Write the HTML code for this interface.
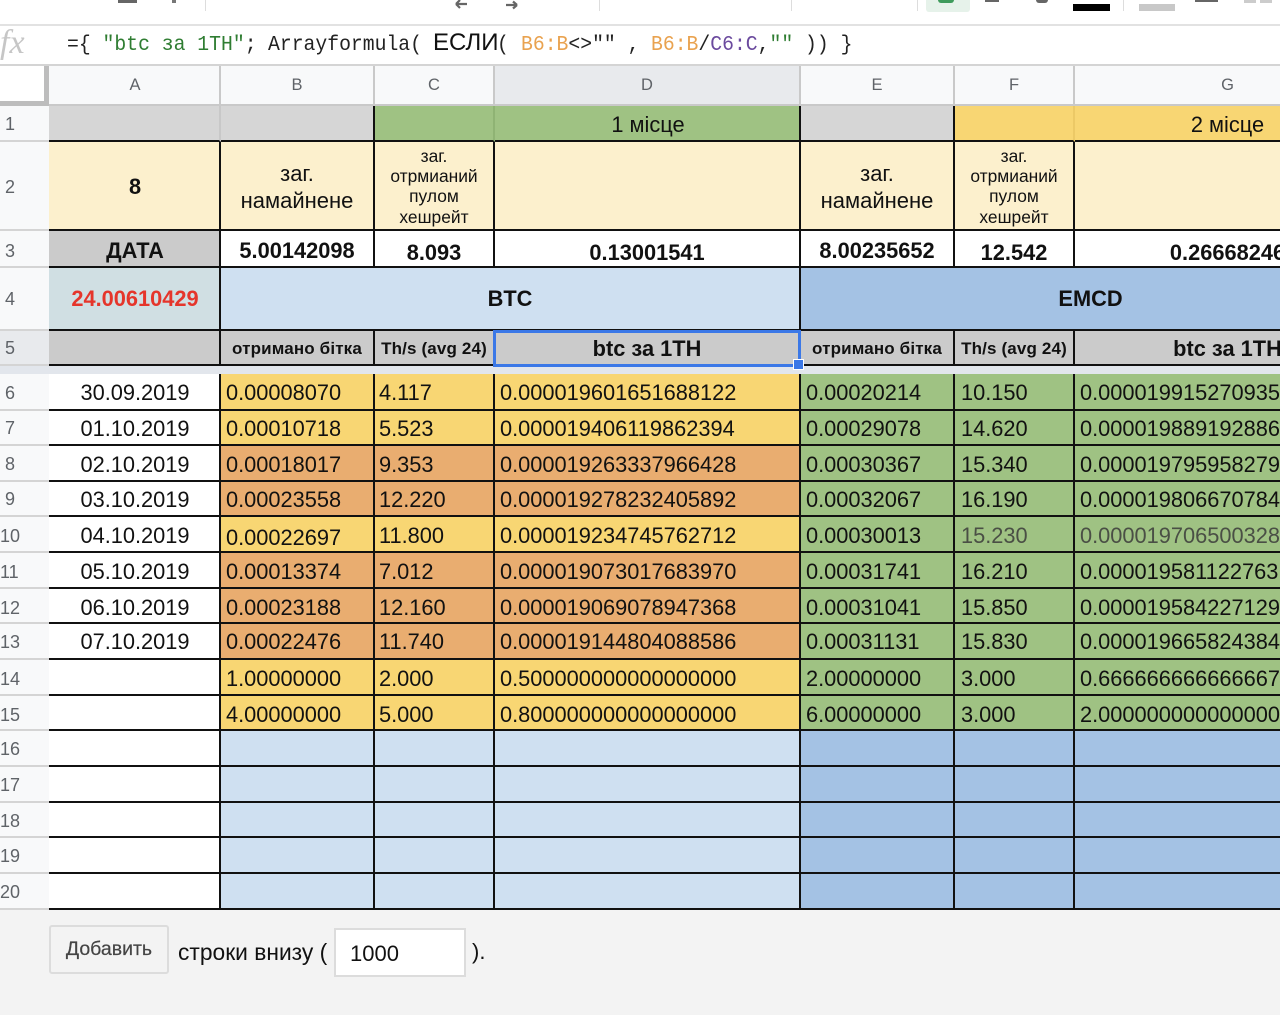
<!DOCTYPE html>
<html><head><meta charset="utf-8"><style>
html,body{margin:0;padding:0}
body{width:1280px;height:1015px;overflow:hidden;position:relative;background:#f3f3f3;font-family:"Liberation Sans",Arial,sans-serif;color:#111}
div,span{box-sizing:border-box}
.p{position:absolute}
.r{position:absolute;left:0;width:1400px;font-size:21.8px}
.r>div{position:absolute;top:0;bottom:0;border-right:2px solid #111;border-bottom:2px solid #111;white-space:nowrap;overflow:hidden;padding-left:5px}
.r>.h{left:0;width:49px;background:#f8f9fa;border-right:0;border-bottom:2px solid #d4d4d4;color:#5f6368;font-size:18px;text-align:left;padding-left:5px}
.r>.a{left:49px;width:172px;text-align:center;padding:0 0 0 2px}
.r>.b{left:221px;width:154px}
.r>.c{left:375px;width:120px;padding-left:4px}
.r>.d{left:495px;width:306px}
.r>.e{left:801px;width:154px}
.r>.f{left:955px;width:120px;padding-left:6px}
.r>.g{left:1075px;width:325px;border-right:0}
.r>.ct{text-align:center;padding:0}
.y{background:#f8d673}.o{background:#e9ad70}.n{background:#9fc283}.l{background:#cfe0f1}.m{background:#a4c2e4}.w{background:#fff}.q{background:#cbcbcb}.cr{background:#fcf0cd}.gr{background:#d6d6d6}
.t{font-weight:bold}
.s{font-size:17px;font-weight:bold;letter-spacing:.15px}
.x{font-size:22px;line-height:27px;padding-top:18px!important;white-space:normal}
.z{font-size:17.4px;line-height:20.2px;padding-top:4px!important;white-space:normal}
.col{position:absolute;top:66px;height:38px;background:#f8f9fa;border-right:2px solid #c9c9c9;text-align:center;line-height:39px;font-size:16.5px;color:#5f6368}
.fm{position:absolute;top:33px;font-family:"Liberation Mono",monospace;font-size:21px;line-height:26px;white-space:pre;color:#222;transform:scaleX(.94);transform-origin:0 0}
</style></head><body>

<!-- toolbar -->
<div class="p" style="left:0;top:0;width:1280px;height:25px;background:#fff"></div>
<div class="p" style="left:118px;top:0;width:19px;height:3px;background:#666"></div>
<div class="p" style="left:172px;top:0;width:4px;height:3px;background:#777"></div>
<div class="p" style="left:205px;top:0;width:1px;height:11px;background:#ddd"></div>
<div class="p" style="left:599px;top:0;width:1px;height:11px;background:#ddd"></div>
<div class="p" style="left:791px;top:0;width:1px;height:11px;background:#ddd"></div>
<div class="p" style="left:917px;top:0;width:1px;height:11px;background:#ddd"></div>
<div class="p" style="left:1123px;top:0;width:1px;height:11px;background:#ddd"></div>
<svg class="p" style="left:453px;top:0" width="16" height="12"><path d="M3 4H14M3 4L7 0M3 4L7 8" stroke="#666" stroke-width="2.2" fill="none"/></svg>
<svg class="p" style="left:504px;top:0" width="16" height="12"><path d="M2 5H13M13 5L9 1.5M13 5L9 8.5" stroke="#666" stroke-width="2.2" fill="none"/></svg>
<div class="p" style="left:926px;top:0;width:44px;height:12px;background:#e6f2ea;border-radius:0 0 3px 3px"></div>
<div class="p" style="left:938px;top:0;width:16px;height:3px;background:#3f9b5c;border-radius:0 0 4px 4px"></div>
<div class="p" style="left:985px;top:0;width:14px;height:2px;background:#666"></div>
<div class="p" style="left:1036px;top:0;width:12px;height:3px;background:#666;border-radius:0 0 6px 6px"></div>
<div class="p" style="left:1073px;top:4px;width:37px;height:7px;background:#000"></div>
<div class="p" style="left:1139px;top:4px;width:36px;height:7px;background:#c8c8c8"></div>
<div class="p" style="left:1195px;top:0;width:23px;height:2px;background:#666"></div>
<div class="p" style="left:1244px;top:0;width:12px;height:3px;background:#ccc"></div>
<div class="p" style="left:1260px;top:0;width:12px;height:3px;background:#ccc"></div>

<!-- formula bar -->
<div class="p" style="left:0;top:24px;width:1280px;height:2px;background:#e2e2e2"></div>
<div class="p" style="left:0;top:26px;width:1280px;height:38px;background:#fff"></div>
<div class="p" style="left:0;top:64px;width:1280px;height:2px;background:#d4d4d4"></div>
<div class="p" style="left:0;top:25px;font-family:'Liberation Serif',serif;font-style:italic;font-size:34px;line-height:36px;color:#c6c6c6">fx</div>
<div class="fm" style="left:67px">={ <span style="color:#2f7d32">"btc за 1TH"</span>;</div>
<div class="fm" style="left:268px">Arrayformula(</div>
<div class="p" style="left:433px;top:29px;font-size:24px;line-height:28px;color:#111">ЕСЛИ</div>
<div class="fm" style="left:497px">( </div>
<div class="fm" style="left:521px"><span style="color:#e9a24f">B6:B</span>&lt;&gt;"" ,</div>
<div class="fm" style="left:651px"><span style="color:#e9a24f">B6:B</span>/<span style="color:#6b4a9e">C6:C</span>,<span style="color:#2f7d32">""</span> )) }</div>

<!-- col headers -->
<div class="p" style="left:0;top:66px;width:49px;height:40px;background:#fff;border-right:5px solid #bdbdbd;border-bottom:5px solid #bdbdbd"></div>
<div class="col" style="left:49px;width:172px;padding-left:2px">A</div>
<div class="col" style="left:221px;width:154px">B</div>
<div class="col" style="left:375px;width:120px">C</div>
<div class="col" style="left:495px;width:306px;background:#e8eaed">D</div>
<div class="col" style="left:801px;width:154px">E</div>
<div class="col" style="left:955px;width:120px">F</div>
<div class="col" style="left:1075px;width:305px;border-right:0">G</div>
<div class="p" style="left:49px;top:104px;width:1231px;height:2px;background:#c9c9c9"></div>

<!-- row 1 -->
<div class="r" style="top:106px;height:36px;line-height:37px">
<div class="h">1</div>
<div class="a gr" style="border-right-color:#c8c8c8"></div><div class="b gr"></div>
<div class="c n" style="border-right-color:#8fb374"></div><div class="d n ct" style="padding-left:2px">1 місце</div>
<div class="e gr"></div>
<div class="f" style="background:#f8d673;border-right-color:#ecc966"></div><div class="g ct" style="background:#f8d673;width:305px">2 місце</div>
</div>
<!-- row 2 -->
<div class="r" style="top:142px;height:89px;line-height:90px">
<div class="h">2</div>
<div class="a cr t">8</div>
<div class="b cr ct x">заг.<br>намайнене</div>
<div class="c cr ct z">заг.<br>отрмианий<br>пулом<br>хешрейт</div>
<div class="d cr"></div>
<div class="e cr ct x">заг.<br>намайнене</div>
<div class="f cr ct z">заг.<br>отрмианий<br>пулом<br>хешрейт</div>
<div class="g cr"></div>
</div>
<!-- row 3 -->
<div class="r t" style="top:231px;height:37px;line-height:40px">
<div class="h" style="font-weight:normal">3</div>
<div class="a q">ДАТА</div>
<div class="b w ct">5.00142098</div>
<div class="c w ct" style="line-height:43px">8.093</div>
<div class="d w ct" style="line-height:43px">0.13001541</div>
<div class="e w ct">8.00235652</div>
<div class="f w ct" style="line-height:43px">12.542</div>
<div class="g w ct" style="width:305px;line-height:43px">0.26668246</div>
</div>
<!-- row 4 -->
<div class="r t" style="top:268px;height:63px;line-height:62px">
<div class="h" style="font-weight:normal">4</div>
<div class="a" style="background:#d0dfe3;color:#e5352b">24.00610429</div>
<div class="l ct" style="left:221px;width:580px">BTC</div>
<div class="m ct" style="left:801px;width:579px;border-right:0">EMCD</div>
</div>
<!-- row 5 -->
<div class="r" style="top:331px;height:35px;line-height:35px">
<div class="h" style="background:#e8eaed">5</div>
<div class="a q"></div>
<div class="b q ct s">отримано бітка</div>
<div class="c q ct s">Th/s (avg 24)</div>
<div class="d q ct t">btc за 1TH</div>
<div class="e q ct s">отримано бітка</div>
<div class="f q ct s">Th/s (avg 24)</div>
<div class="g q ct t" style="width:305px">btc за 1TH</div>
</div>
<div class="p" style="left:0;top:366px;width:1280px;height:8px;background:#e2e6ec"></div>

<!-- data -->
<div class="r" style="top:374px;height:36.5px;line-height:38px"><div class="h">6</div><div class="a w">30.09.2019</div><div class="b y">0.00008070</div><div class="c y">4.117</div><div class="d y">0.000019601651688122</div><div class="e n">0.00020214</div><div class="f n">10.150</div><div class="g n">0.000019915270935960</div></div>
<div class="r" style="top:410.5px;height:35.5px;line-height:35px"><div class="h">7</div><div class="a w">01.10.2019</div><div class="b y">0.00010718</div><div class="c y">5.523</div><div class="d y">0.000019406119862394</div><div class="e n">0.00029078</div><div class="f n">14.620</div><div class="g n">0.000019889192886</div></div>
<div class="r" style="top:446px;height:35.7px;line-height:37px"><div class="h">8</div><div class="a w">02.10.2019</div><div class="b o">0.00018017</div><div class="c o">9.353</div><div class="d o">0.000019263337966428</div><div class="e n">0.00030367</div><div class="f n">15.340</div><div class="g n">0.000019795958279</div></div>
<div class="r" style="top:481.7px;height:35.6px;line-height:35px"><div class="h">9</div><div class="a w">03.10.2019</div><div class="b o">0.00023558</div><div class="c o">12.220</div><div class="d o">0.000019278232405892</div><div class="e n">0.00032067</div><div class="f n">16.190</div><div class="g n">0.000019806670784</div></div>
<div class="r" style="top:517.3px;height:35.7px;line-height:38px"><div class="h" style="padding-left:0">10</div><div class="a w">04.10.2019</div><div class="b y" style="line-height:41px">0.00022697</div><div class="c y">11.800</div><div class="d y">0.000019234745762712</div><div class="e n">0.00030013</div><div class="f n" style="color:#4a4f45">15.230</div><div class="g n" style="color:#4a4f45">0.000019706500328</div></div>
<div class="r" style="top:553px;height:35.5px;line-height:38px"><div class="h" style="padding-left:0">11</div><div class="a w">05.10.2019</div><div class="b o">0.00013374</div><div class="c o">7.012</div><div class="d o">0.000019073017683970</div><div class="e n">0.00031741</div><div class="f n">16.210</div><div class="g n">0.000019581122763</div></div>
<div class="r" style="top:588.5px;height:35.5px;line-height:38px"><div class="h" style="padding-left:0">12</div><div class="a w">06.10.2019</div><div class="b o">0.00023188</div><div class="c o">12.160</div><div class="d o">0.000019069078947368</div><div class="e n">0.00031041</div><div class="f n">15.850</div><div class="g n">0.000019584227129</div></div>
<div class="r" style="top:624px;height:36px;line-height:36px"><div class="h" style="padding-left:0">13</div><div class="a w">07.10.2019</div><div class="b o">0.00022476</div><div class="c o">11.740</div><div class="d o">0.000019144804088586</div><div class="e n">0.00031131</div><div class="f n">15.830</div><div class="g n">0.000019665824384</div></div>
<div class="r" style="top:660px;height:35.5px;line-height:38px"><div class="h" style="padding-left:0">14</div><div class="a w"></div><div class="b y">1.00000000</div><div class="c y">2.000</div><div class="d y">0.500000000000000000</div><div class="e n">2.00000000</div><div class="f n">3.000</div><div class="g n">0.666666666666667</div></div>
<div class="r" style="top:695.5px;height:35.5px;line-height:38px"><div class="h" style="padding-left:0">15</div><div class="a w"></div><div class="b y">4.00000000</div><div class="c y">5.000</div><div class="d y">0.800000000000000000</div><div class="e n">6.00000000</div><div class="f n">3.000</div><div class="g n">2.000000000000000</div></div>
<div class="r" style="top:731px;height:36px;line-height:37px"><div class="h" style="padding-left:0">16</div><div class="a w"></div><div class="b l"></div><div class="c l"></div><div class="d l"></div><div class="e m"></div><div class="f m"></div><div class="g m"></div></div>
<div class="r" style="top:767px;height:35.5px;line-height:37px"><div class="h" style="padding-left:0">17</div><div class="a w"></div><div class="b l"></div><div class="c l"></div><div class="d l"></div><div class="e m"></div><div class="f m"></div><div class="g m"></div></div>
<div class="r" style="top:802.5px;height:35.5px;line-height:37px"><div class="h" style="padding-left:0">18</div><div class="a w"></div><div class="b l"></div><div class="c l"></div><div class="d l"></div><div class="e m"></div><div class="f m"></div><div class="g m"></div></div>
<div class="r" style="top:838px;height:36px;line-height:37px"><div class="h" style="padding-left:0">19</div><div class="a w"></div><div class="b l"></div><div class="c l"></div><div class="d l"></div><div class="e m"></div><div class="f m"></div><div class="g m"></div></div>
<div class="r" style="top:874px;height:36px;line-height:37px"><div class="h" style="padding-left:0">20</div><div class="a w"></div><div class="b l"></div><div class="c l"></div><div class="d l"></div><div class="e m"></div><div class="f m"></div><div class="g m"></div></div>

<!-- selection -->
<div class="p" style="left:493px;top:330px;width:308px;height:37px;border:3px solid #3b78e7"></div>
<div class="p" style="left:793px;top:359px;width:11px;height:11px;background:#3b78e7;border:1px solid #fff"></div>

<!-- footer -->
<div class="p" style="left:49px;top:925px;width:120px;height:49px;background:#f3f3f3;border:2px solid #dcdcdc;border-radius:3px;text-align:center;font-size:19.5px;line-height:44px;color:#444;-webkit-text-stroke:.2px #444">Добавить</div>
<div class="p" style="left:178px;top:938px;font-size:22.8px;line-height:28px;white-space:nowrap">строки внизу (</div>
<div class="p" style="left:334px;top:928px;width:132px;height:49px;background:#fff;border:2px solid #dcdcdc;font-size:22px;line-height:47px;padding-left:14px">1000</div>
<div class="p" style="left:472px;top:938px;font-size:22px;line-height:28px">).</div>
</body></html>
